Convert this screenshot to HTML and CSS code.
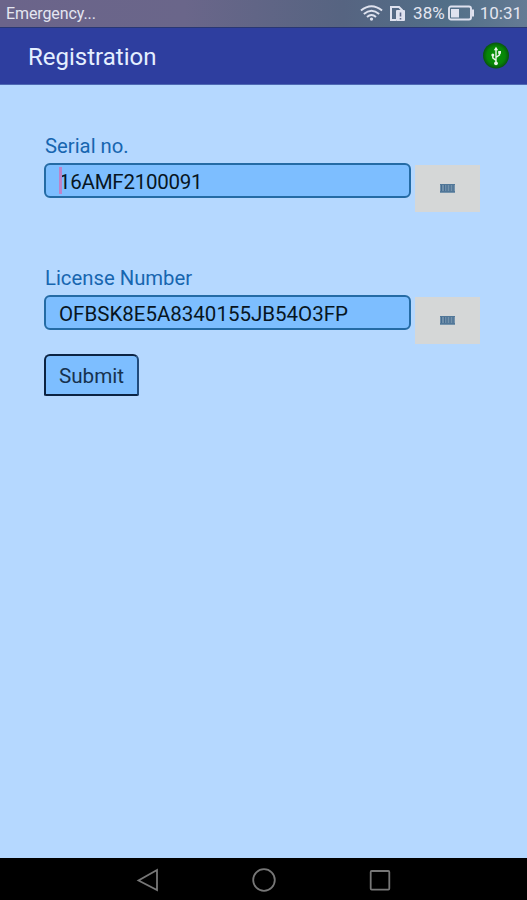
FILE: index.html
```html
<!DOCTYPE html>
<html lang="en">
<head>
    <meta charset="UTF-8">
    <meta name="viewport" content="width=device-width, initial-scale=1.0">
    <title>Registration</title>
    <link rel="stylesheet" href="styles.css">
</head>
<body>
    <div class="status-bar">
        <span class="carrier">Emergency...</span>
        <div class="status-icons">
            <svg class="wifi" width="23" height="18" viewBox="0 0 24 18" fill="none" stroke="#dfe2ef" stroke-width="2">
                <path d="M1 6.5Q12 -2.5 23 6.5M4 10Q12 3.2 20 10M7.3 13.2Q12 9 16.7 13.2"/>
                <circle cx="12" cy="15.3" r="1.7" fill="#dfe2ef" stroke="none"/>
            </svg>
            <svg class="sim" width="17" height="17" viewBox="0 0 17 17">
                <path d="M7 15H2V2h8l3.5 3.5" fill="none" stroke="#dfe2ef" stroke-width="2"/>
                <rect x="7" y="5" width="9" height="11" rx="1" fill="#dfe2ef"/>
                <path d="M11.5 7.5v4M11.5 13v1.5" stroke="#5b6688" stroke-width="1.6"/>
            </svg>
            <span class="percent">38%</span>
            <svg class="battery" width="27" height="16" viewBox="0 0 27 16">
                <rect x="1" y="1.5" width="22" height="13" rx="2" fill="none" stroke="#dfe2ef" stroke-width="1.9"/>
                <rect x="3" y="4" width="8" height="8.5" fill="#dfe2ef"/>
                <path d="M25 4.5v7" stroke="#dfe2ef" stroke-width="2"/>
            </svg>
            <span class="time">10:31</span>
        </div>
    </div>

    <header class="app-bar">
        <h1>Registration</h1>
        <svg width="28" height="28" viewBox="0 0 28 28">
            <defs>
                <radialGradient id="green">
                    <stop offset="0" stop-color="#079407"/>
                    <stop offset="0.7" stop-color="#078507"/>
                    <stop offset="1" stop-color="#07540f"/>
                </radialGradient>
            </defs>
            <circle cx="14" cy="13.5" r="13" fill="url(#green)"/>
            <g fill="none" stroke="#e9f5e9" stroke-width="1.4">
                <path d="M14 21V7M14 18.5l-3.2-2.7v-2.5M14 15.5l3.5-2.7v-2.5"/>
            </g>
            <path d="M14 4.8l2.2 3.4h-4.4zM16.2 9h2.8v2.8h-2.8z" fill="#e9f5e9"/>
            <circle cx="14" cy="21.3" r="1.9" fill="#e9f5e9"/>
            <circle cx="10.8" cy="13" r="1.5" fill="#e9f5e9"/>
        </svg>
    </header>

    <main>
        <form>
            <div class="field">
                <label for="serial">Serial no.</label>
                <div class="row">
                    <div class="input-wrap">
                        <input type="text" id="serial" value="16AMF2100091">
                        <span class="cursor"></span>
                    </div>
                    <button type="button" class="scan-btn" aria-label="Scan serial number">
                        <svg width="15" height="10" viewBox="0 0 15 10">
                            <path d="M0 0h15v9H0z" fill="#7392ab"/>
                            <path d="M1.5 0v8M4.5 0v8M7 0v8M10 0v8M13 0v8" stroke="#456c91" stroke-width="1.2"/>
                            <path d="M0 .5h15M0 7.5h15" stroke="#517798" stroke-width="1"/>
                        </svg>
                    </button>
                </div>
            </div>

            <div class="field">
                <label for="license">License Number</label>
                <div class="row">
                    <div class="input-wrap">
                        <input type="text" id="license" value="OFBSK8E5A8340155JB54O3FP">
                    </div>
                    <button type="button" class="scan-btn" aria-label="Scan license number">
                        <svg width="15" height="10" viewBox="0 0 15 10">
                            <path d="M0 0h15v9H0z" fill="#7392ab"/>
                            <path d="M1.5 0v8M4.5 0v8M7 0v8M10 0v8M13 0v8" stroke="#456c91" stroke-width="1.2"/>
                            <path d="M0 .5h15M0 7.5h15" stroke="#517798" stroke-width="1"/>
                        </svg>
                    </button>
                </div>
            </div>

            <button type="submit" class="submit-btn">Submit</button>
        </form>
    </main>

    <nav class="nav-bar">
        <svg width="24" height="24" viewBox="0 0 24 24"><path d="M21 2v20L2.5 12.5z"/></svg>
        <svg width="24" height="24" viewBox="0 0 24 24"><circle cx="12" cy="12" r="10.8"/></svg>
        <svg width="24" height="24" viewBox="0 0 24 24"><rect x="2.7" y="3" width="18.6" height="18.6" rx="1"/></svg>
    </nav>
</body>
</html>
```

FILE: styles.css
```css
* {
    box-sizing: border-box;
}
body {
    font-family: Roboto, sans-serif;
    background-color: #b5d8ff;
    margin: 0;
    height: 100vh;
    display: flex;
    flex-direction: column;
}
.status-bar {
    height: 27px;
    padding: 0 5px 0 6px;
    display: flex;
    align-items: center;
    justify-content: space-between;
    background: linear-gradient(to right, #6b648a 0%, #6a668a 35%, #566481 65%, #526f88 85%, #657b94 100%);
    color: #e4e6f1;
    font-size: 17px;
}
.carrier {
    font-size: 16px;
    letter-spacing: -0.1px;
    margin-top: -1px;
}
.status-icons {
    display: flex;
    align-items: center;
    margin-top: -1px;
}
.sim {
    margin: 0 7px 0 6px;
}
.battery {
    margin: 0 5px 0 3px;
}
.app-bar {
    height: 58px;
    padding: 0 17px 0 28px;
    display: flex;
    align-items: center;
    justify-content: space-between;
    background: #2e3e9f;
    border-top: 1px solid #293773;
    border-bottom: 1px solid #4e69b4;
}
.app-bar h1 {
    margin: 2px 0 0;
    color: #e4efff;
    font-size: 24px;
    font-weight: 400;
}
main {
    flex: 1;
    padding: 48px 46px 0 44px;
}
.field {
    height: 132px;
}
.field label {
    display: block;
    height: 30px;
    padding-left: 1px;
    line-height: 26px;
    color: #1766b0;
    font-size: 20.3px;
}
.row {
    display: flex;
    gap: 4px;
}
.input-wrap {
    position: relative;
    width: 367px;
}
.input-wrap input {
    display: block;
    width: 100%;
    height: 35px;
    padding: 2px 13px 0;
    background: #7dbeff;
    border: 2px solid #246ba5;
    border-radius: 6px;
    color: #071522;
    font-family: inherit;
    font-size: 20.5px;
    outline: none;
}
#serial {
    letter-spacing: -0.25px;
}
.cursor {
    position: absolute;
    left: 15px;
    top: 4px;
    width: 3px;
    height: 27px;
    background: #bd83c8;
}
.scan-btn {
    display: flex;
    align-items: center;
    justify-content: center;
    width: 65px;
    height: 47px;
    margin-top: 2px;
    padding: 0;
    background: #d5d7d7;
    border: none;
}
.submit-btn {
    display: block;
    width: 95px;
    height: 42px;
    margin-top: -43px;
    padding: 2px 0 0;
    background: #7dbeff;
    border: 2px solid #0b2343;
    border-right-color: #1f4b7c;
    border-radius: 6px 6px 2px 2px;
    color: #16324f;
    font-family: inherit;
    font-size: 20.7px;
}
.nav-bar {
    height: 42px;
    padding: 2px 135px 0 136px;
    display: flex;
    align-items: center;
    justify-content: space-between;
    background: #000;
}
.nav-bar svg {
    fill: none;
    stroke: #777;
    stroke-width: 1.8;
}
```
